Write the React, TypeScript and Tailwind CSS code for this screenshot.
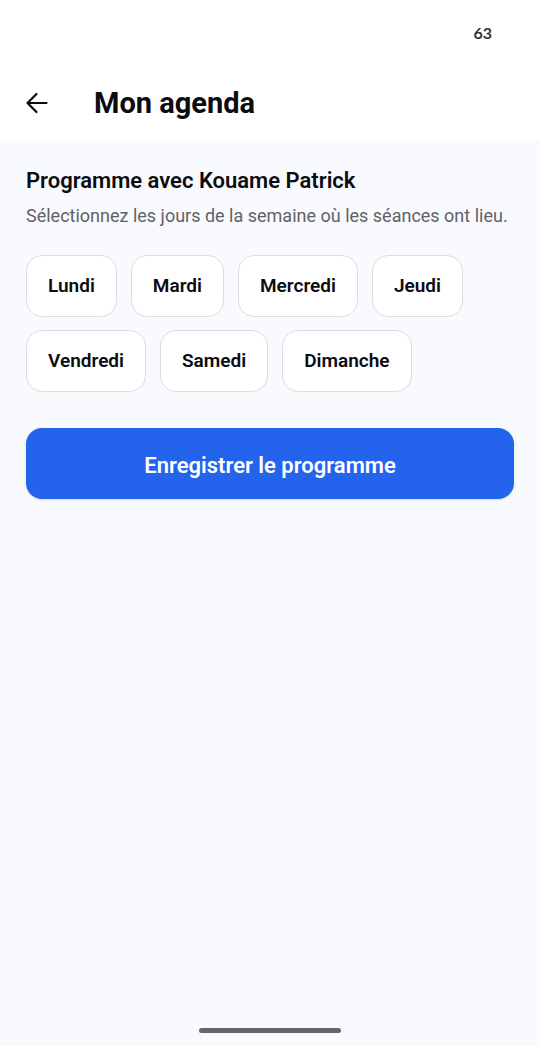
import { useState } from 'react';

const days = ['Lundi', 'Mardi', 'Mercredi', 'Jeudi', 'Vendredi', 'Samedi', 'Dimanche'];

export default function App() {
  const [selected, setSelected] = useState<string[]>([]);

  const toggle = (day: string) =>
    setSelected((current) =>
      current.includes(day) ? current.filter((d) => d !== day) : [...current, day],
    );

  return (
    <div className="flex min-h-screen flex-col bg-[#f9fafd] font-['Roboto',sans-serif] text-[#0b0c10]">
      <header className="bg-white">
        <div className="flex h-[66px] items-center justify-end px-12 font-['Lato',sans-serif] text-base font-bold text-[#333333]">
          63
        </div>
        <div className="flex h-[74px] items-center gap-11 px-6">
          <button type="button" aria-label="Retour">
            <svg
              viewBox="0 0 26 26"
              className="size-[26px]"
              fill="none"
              stroke="currentColor"
              strokeWidth="2.2"
              strokeLinecap="round"
              strokeLinejoin="round"
            >
              <path d="M22.5 13H3.5M12.5 4L3.5 13l9 9" />
            </svg>
          </button>
          <h1 className="text-[29px] leading-9 font-bold">Mon agenda</h1>
        </div>
      </header>

      <main className="flex flex-1 flex-col px-[26px] pt-[26px]">
        <h2 className="text-[22px] leading-[30px] font-semibold">Programme avec Kouame Patrick</h2>
        <p className="mt-2 text-lg leading-6 text-[#5f6266]">
          Sélectionnez les jours de la semaine où les séances ont lieu.
        </p>
        <div className="mt-[27px] flex flex-wrap gap-x-[14px] gap-y-[13px]">
          {days.map((day) => (
            <button
              key={day}
              type="button"
              aria-pressed={selected.includes(day)}
              onClick={() => toggle(day)}
              className="h-[62px] rounded-2xl border border-[#dcdde3] bg-white px-[21px] text-[19px] font-semibold aria-pressed:border-[#2463eb] aria-pressed:text-[#2463eb]"
            >
              {day}
            </button>
          ))}
        </div>
        <button
          type="button"
          className="mt-9 rounded-2xl bg-[#2463eb] px-4 pt-6 pb-5 text-[22px] leading-[27px] font-semibold text-white shadow-sm"
        >
          Enregistrer le programme
        </button>
      </main>

      <footer className="flex justify-center pb-[13px]">
        <div className="h-[5px] w-[142px] rounded-full bg-[#65666a]" />
      </footer>
    </div>
  );
}
